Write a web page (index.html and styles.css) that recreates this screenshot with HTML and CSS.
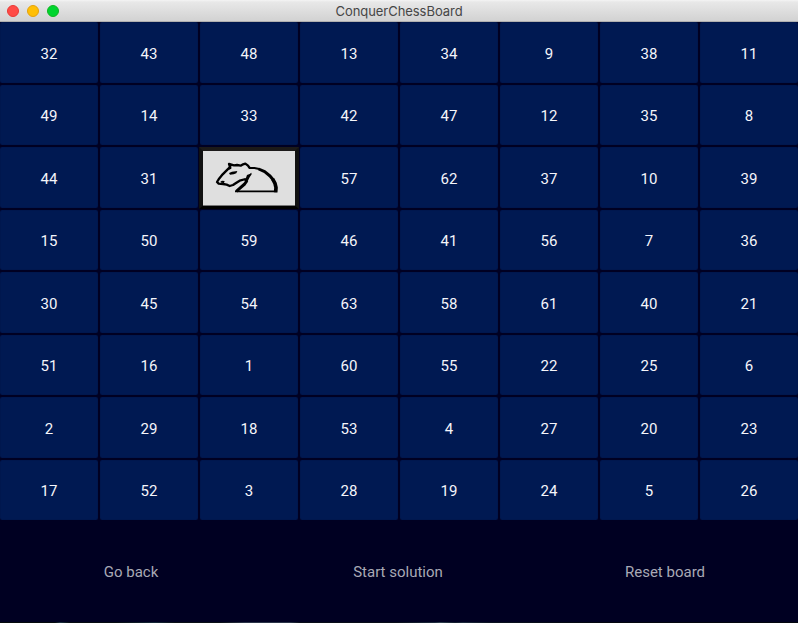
FILE: index.html
```html
<!DOCTYPE html>
<html lang="en">
<head>
<meta charset="utf-8">
<title>ConquerChessBoard</title>
<link rel="stylesheet" href="styles.css">
</head>
<body>
<header class="titlebar">
  <div class="lights"><i class="light close"></i><i class="light minimize"></i><i class="light expand"></i></div>
  <span class="title">ConquerChessBoard</span>
</header>
<main class="board">
  <div class="cell">32</div><div class="cell">43</div><div class="cell">48</div><div class="cell">13</div><div class="cell">34</div><div class="cell">9</div><div class="cell">38</div><div class="cell">11</div>
  <div class="cell">49</div><div class="cell">14</div><div class="cell">33</div><div class="cell">42</div><div class="cell">47</div><div class="cell">12</div><div class="cell">35</div><div class="cell">8</div>
  <div class="cell">44</div><div class="cell">31</div>
  <div class="cell current">
    <svg class="knight" viewBox="27 21 300 186">
      <path fill="#111" d="M27 21H327V207H27Z"/>
      <path fill="#1c1a19" d="M27 21H327L315 33H39Z"/>
      <path fill="#000" d="M27 207L39 197H315L327 207Z"/>
      <path fill="#dfdfdf" d="M39 33H315V198H39Z"/>
      <path fill="#777" d="M39 195H315V198H39Z"/>
      <g fill="none" stroke="#000" stroke-linejoin="round">
        <path stroke-width="7" d="M179 84L174 77L166 71L157 74L152 77L141 75L132 76L117 72L120 81L113 88L98 103L86 118L81 126L86 131L99 132L110 134L119 138L129 135L138 129L149 122L167 117"/>
        <path stroke-width="6" d="M177 84L193 84L208 87"/>
        <path stroke-width="9" d="M206 87L224 95L240 108L250 120"/>
        <path stroke-width="11" d="M248 117L255 130L258 143L257 157"/>
        <path stroke-width="5" d="M135 154H260"/>
        <path stroke-width="9" d="M139 154L149 145L164 132L171 122"/>
      </g>
      <path fill="#000" d="M184 98L179 102L171 105L168 113L162 119L167 127L173 124L179 112L185 103ZM117 99L126 95L142 93L139 100L131 103L120 104ZM91 125L96 122L104 123L102 129L94 128ZM117 75L124 72L124 86L116 90Z"/>
    </svg>
  </div>
  <div class="cell">57</div><div class="cell">62</div><div class="cell">37</div><div class="cell">10</div><div class="cell">39</div>
  <div class="cell">15</div><div class="cell">50</div><div class="cell">59</div><div class="cell">46</div><div class="cell">41</div><div class="cell">56</div><div class="cell">7</div><div class="cell">36</div>
  <div class="cell">30</div><div class="cell">45</div><div class="cell">54</div><div class="cell">63</div><div class="cell">58</div><div class="cell">61</div><div class="cell">40</div><div class="cell">21</div>
  <div class="cell">51</div><div class="cell">16</div><div class="cell">1</div><div class="cell">60</div><div class="cell">55</div><div class="cell">22</div><div class="cell">25</div><div class="cell">6</div>
  <div class="cell">2</div><div class="cell">29</div><div class="cell">18</div><div class="cell">53</div><div class="cell">4</div><div class="cell">27</div><div class="cell">20</div><div class="cell">23</div>
  <div class="cell">17</div><div class="cell">52</div><div class="cell">3</div><div class="cell">28</div><div class="cell">19</div><div class="cell">24</div><div class="cell">5</div><div class="cell">26</div>
</main>
<footer class="actions">
  <div class="action">Go back</div>
  <div class="action">Start solution</div>
  <div class="action">Reset board</div>
</footer>
<div class="edge"></div>
</body>
</html>
```
FILE: styles.css
```css
* { box-sizing: border-box; }
body {
  margin: 0;
  height: 623px;
  display: flex;
  flex-direction: column;
  overflow: hidden;
  background: #000022;
  font-family: Roboto, sans-serif;
}
.titlebar {
  height: 22px;
  display: grid;
  grid-template-columns: 1fr auto 1fr;
  align-items: center;
  background: linear-gradient(#f4f4f4, #e8e8e8 10%, #d2d2d2);
  border-bottom: 1px solid #b0b0b0;
}
.lights { display: flex; gap: 8px; padding-left: 7px; }
.light { width: 12px; height: 12px; border-radius: 50%; border: 1px solid; }
.close { background: #ff4b47; border-color: #e93a36; }
.minimize { background: #ffbf05; border-color: #e5a20b; }
.expand { background: #00d52f; border-color: #10b521; }
.title {
  color: #464646;
  font: 13px/20px Inter, sans-serif;
  letter-spacing: -0.05px;
  padding-top: 1px;
}
.board {
  height: 498px;
  display: grid;
  grid-template-columns: repeat(8, 98px);
  grid-template-rows: repeat(8, 60.5px);
  gap: 2px;
}
.cell {
  display: flex;
  align-items: center;
  justify-content: center;
  padding-top: 3px;
  background: #001952;
  border-radius: 2px;
  box-shadow: inset 0 0 1px #000c38;
  color: #f5f5fa;
  font-size: 15px;
}
.current { position: relative; }
.knight {
  position: absolute;
  left: -1px;
  top: 0;
  width: 100px;
  height: 62px;
}
.actions {
  flex: 1;
  display: grid;
  grid-template-columns: 262px 272px 262px;
  padding-top: 1px;
  color: #a9a9b5;
  font-size: 15px;
}
.action { display: flex; align-items: center; justify-content: center; }
.edge {
  height: 1px;
  background: linear-gradient(90deg, #050a0c 0 55px, #1c3342 60px, #060c10 70px 115px, #142838 155px, #0a1016 175px 220px, #2a3448 245px 290px, #080d18 300px 395px, #1c2a3c 435px, #30424f 440px, #111c2c 455px, #1c2a3c 463px, #0a1220 490px, #03060e 600px);
}
```
